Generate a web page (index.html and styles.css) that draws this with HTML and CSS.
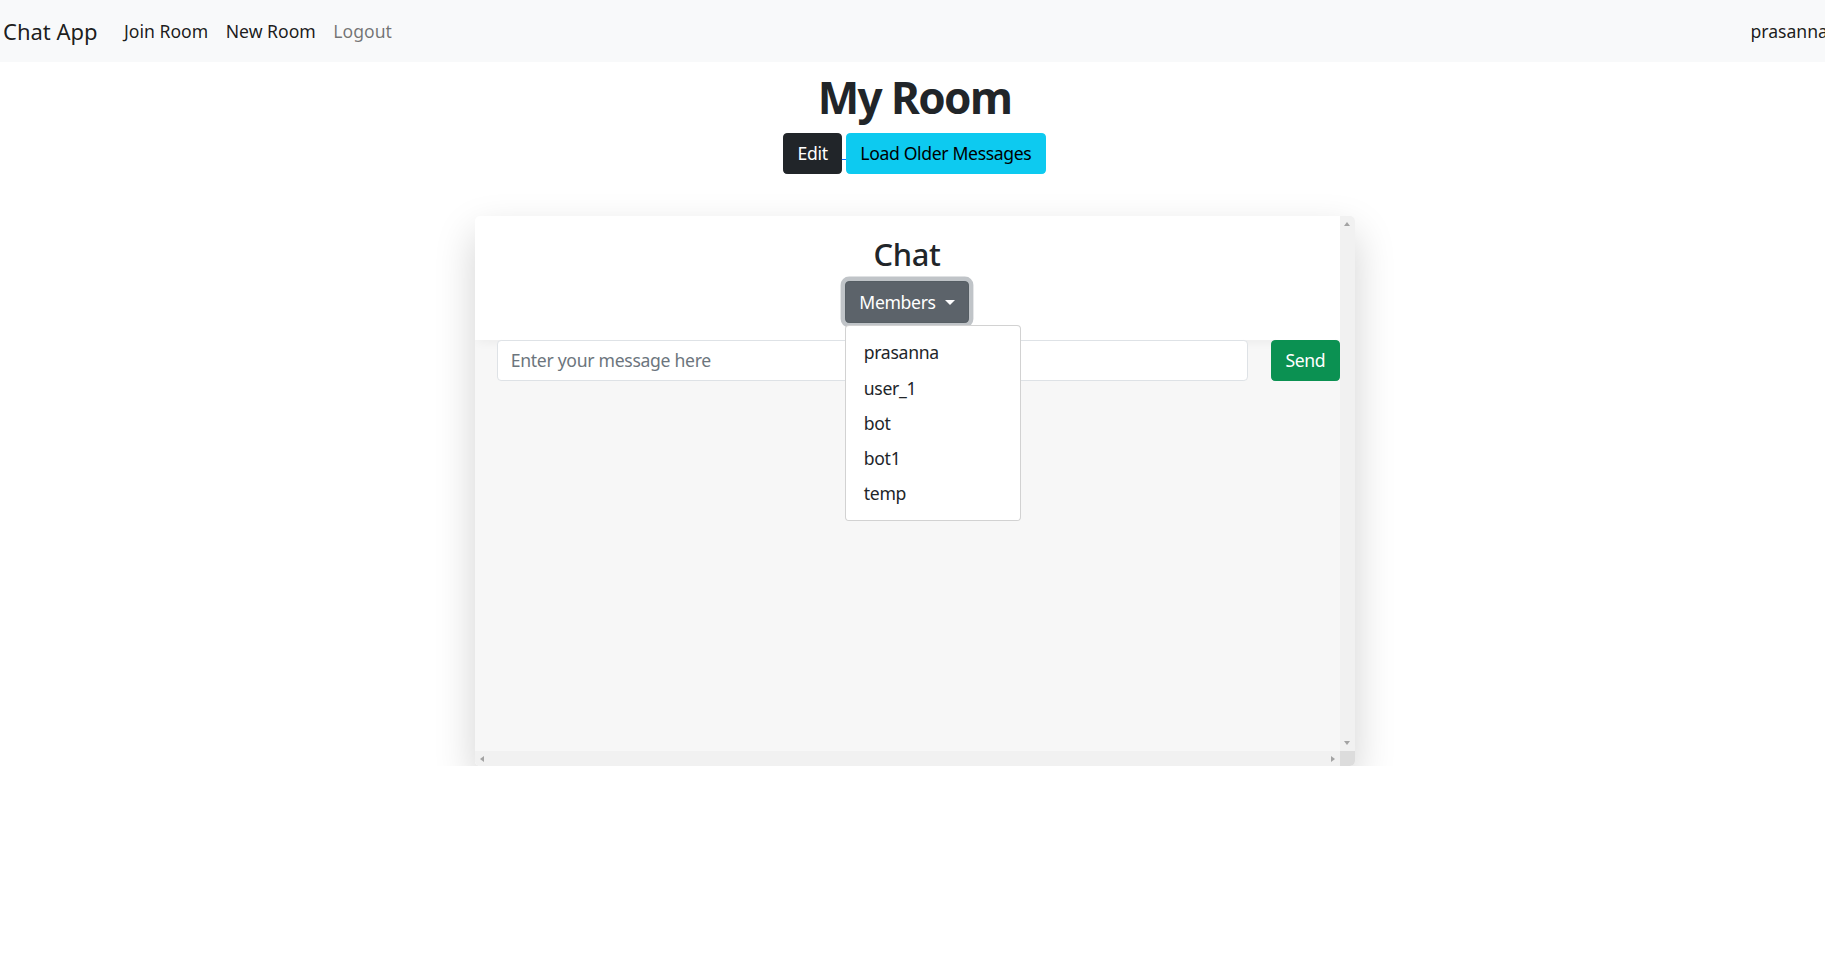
FILE: index.html
```html
<!DOCTYPE html>
<html lang="en">
<head>
<meta charset="utf-8">
<title>Chat App</title>
<link rel="stylesheet" href="styles.css">
</head>
<body>
<nav class="navbar">
  <div class="nav-left">
    <a class="brand" href="#">Chat App</a>
    <a class="nav-link" href="#">Join Room</a>
    <a class="nav-link" href="#">New Room</a>
    <a class="nav-link muted" href="#">Logout</a>
  </div>
  <span class="nav-user">prasanna</span>
</nav>
<main class="main">
  <h1 class="room-title">My Room</h1>
  <div class="room-actions"><a class="edit-link" href="#"><button class="btn btn-dark">Edit</button> </a><button class="btn btn-info">Load Older Messages</button></div>
  <section class="chat-card">
    <div class="chat-view">
      <header class="chat-head">
        <h3 class="chat-title">Chat</h3>
        <div class="dropdown">
          <button class="btn btn-secondary dropdown-toggle">Members</button>
          <ul class="dropdown-menu">
            <li class="dropdown-item">prasanna</li>
            <li class="dropdown-item">user_1</li>
            <li class="dropdown-item">bot</li>
            <li class="dropdown-item">bot1</li>
            <li class="dropdown-item">temp</li>
          </ul>
        </div>
      </header>
      <form class="msg-row">
        <input class="msg-input" type="text" placeholder="Enter your message here">
        <button class="btn btn-success" type="button">Send</button>
      </form>
    </div>
    <div class="vscroll"><span class="arrow arrow-up"></span><span class="arrow arrow-down"></span></div>
    <div class="hscroll"><span class="arrow arrow-left"></span><span class="arrow arrow-right"></span></div>
    <div class="scroll-corner"></div>
  </section>
</main>
</body>
</html>
```
FILE: styles.css
```css
* { box-sizing: border-box; }
html, body { margin: 0; padding: 0; }
body {
  font-family: "Noto Sans", "Open Sans", "DejaVu Sans", sans-serif;
  font-size: 17.6px;
  line-height: 1.5;
  color: #212529;
  background: #fff;
}
a { text-decoration: none; }

.navbar {
  display: flex;
  align-items: center;
  justify-content: space-between;
  background: #f8f9fa;
  padding: 8.8px 0 8.8px 3px;
  height: 62px;
}
.nav-left { display: flex; align-items: center; }
.brand {
  font-size: 22px;
  line-height: 33px;
  padding: 5.5px 0;
  margin-right: 17.6px;
  color: rgba(0,0,0,.9);
}
.nav-link {
  padding: 8.8px;
  color: rgba(0,0,0,.9);
}
.nav-link.muted { color: rgba(0,0,0,.55); }
.nav-user { color: rgba(0,0,0,.9); margin-right: -3px; }

.main {
  padding-left: 4px;
  text-align: center;
  letter-spacing: -0.3px;
}
.room-title {
  font-size: 44px;
  font-weight: 700;
  line-height: 1.2;
  letter-spacing: -1.6px;
  margin: 9px 0 8.8px;
}
.room-actions { line-height: 1.5; }
.edit-link { color: #0d6efd; text-decoration: underline; }

.btn {
  display: inline-block;
  font-family: inherit;
  font-size: 17.6px;
  letter-spacing: -0.35px;
  line-height: 26.4px;
  padding: 6.6px 13.2px;
  border: 1px solid transparent;
  border-radius: 4.1px;
  vertical-align: middle;
  cursor: pointer;
}
.btn-dark { background: #212529; border-color: #212529; color: #fff; }
.btn-info { background: #0dcaf0; border-color: #0dcaf0; color: #000; }
.btn-secondary {
  background: #5c636a;
  border-color: #565e64;
  color: #fff;
  box-shadow: 0 0 0 4.4px rgba(130,138,145,.5);
}
.btn-success { background: #0b9152; border-color: #0b9152; color: #fff; }

.dropdown-toggle::after {
  content: "";
  display: inline-block;
  margin-left: 9px;
  vertical-align: .255em;
  border-top: .3em solid;
  border-right: .3em solid transparent;
  border-left: .3em solid transparent;
  border-bottom: 0;
}

.chat-card {
  width: 880px;
  height: 550px;
  margin: 42px auto 0;
  display: grid;
  grid-template-columns: 1fr 15px;
  grid-template-rows: 1fr 15px;
  overflow: hidden;
  border-radius: 5px;
  box-shadow: 0 17px 40px rgba(0,0,0,.18);
  text-align: left;
}
.chat-view {
  background: #f7f7f7;
  overflow: hidden;
  min-height: 0;
}
.chat-head {
  background: #fff;
  text-align: center;
  padding: 19.5px 0 16.5px;
  box-shadow: 0 5px 10px -3px rgba(0,0,0,.05);
}
.chat-title {
  font-size: 30.8px;
  font-weight: 500;
  line-height: 1.2;
  margin: 0 0 8.8px;
}
.dropdown { position: relative; display: inline-block; }
.dropdown-menu {
  position: absolute;
  z-index: 10;
  top: 100%;
  left: 0;
  margin: 2.2px 0 0;
  min-width: 176px;
  padding: 8.8px 0;
  list-style: none;
  text-align: left;
  background: #fff;
  border: 1px solid rgba(0,0,0,.175);
  border-radius: 4.1px;
}
.dropdown-item {
  padding: 4.4px 17.6px;
  line-height: 26.4px;
  color: #212529;
  white-space: nowrap;
}

.msg-row {
  display: flex;
  align-items: flex-start;
  gap: 23px;
  padding-left: 22px;
  margin: 0;
}
.msg-input {
  flex: 1;
  font-family: inherit;
  font-size: 17.6px;
  letter-spacing: -0.3px;
  line-height: 26.4px;
  padding: 6.6px 13.2px;
  border: 1px solid #dee2e6;
  border-radius: 4.1px;
  background: #fff;
  color: #212529;
}
.msg-input::placeholder { color: #6c757d; }

.vscroll, .hscroll {
  background: #f1f1f1;
  display: flex;
  justify-content: space-between;
  align-items: center;
}
.vscroll { flex-direction: column; padding: 6px 0 6px; }
.hscroll { padding: 0 5px 0 5px; }
.scroll-corner { background: #dcdcdc; }
.arrow { width: 0; height: 0; display: block; }
.arrow-up {
  border-left: 3.5px solid transparent;
  border-right: 3.5px solid transparent;
  border-bottom: 4px solid #a3a3a3;
}
.arrow-down {
  border-left: 3.5px solid transparent;
  border-right: 3.5px solid transparent;
  border-top: 4px solid #a3a3a3;
}
.arrow-left {
  border-top: 3.5px solid transparent;
  border-bottom: 3.5px solid transparent;
  border-right: 4px solid #a3a3a3;
}
.arrow-right {
  border-top: 3.5px solid transparent;
  border-bottom: 3.5px solid transparent;
  border-left: 4px solid #a3a3a3;
}
```
